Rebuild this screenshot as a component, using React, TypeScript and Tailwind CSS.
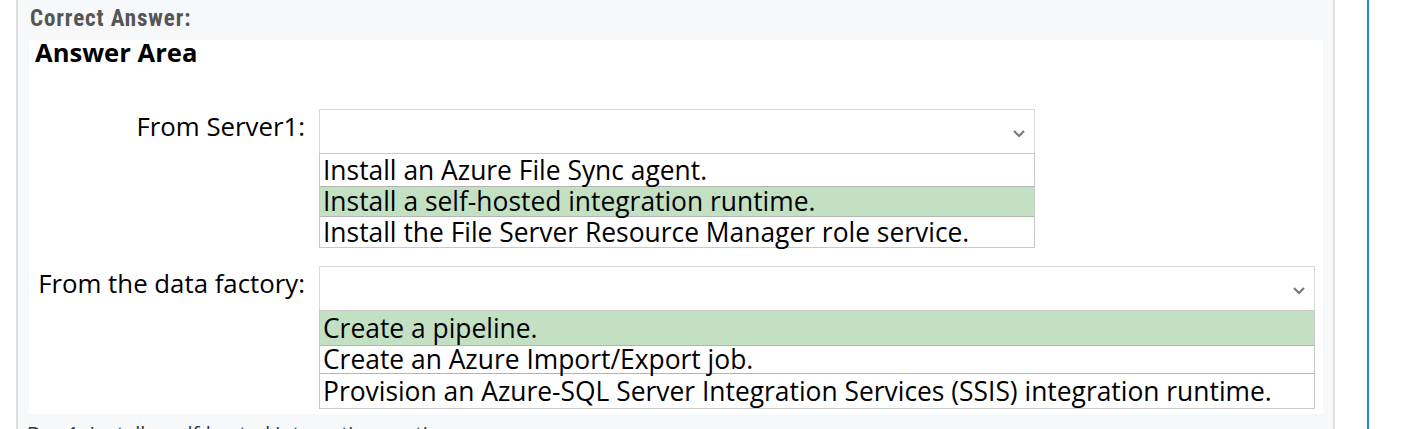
import { ReactNode } from "react";

type Opt = { text: string; correct?: boolean; h: string };

const server1: Opt[] = [
    { text: "Install an Azure File Sync agent.", h: "h-[32px]" },
    { text: "Install a self-hosted integration runtime.", correct: true, h: "h-[30px]" },
    { text: "Install the File Server Resource Manager role service.", h: "h-[31px]" },
];

const factory: Opt[] = [
    { text: "Create a pipeline.", correct: true, h: "h-[34px]" },
    { text: "Create an Azure Import/Export job.", h: "h-[28px]" },
    { text: "Provision an Azure-SQL Server Integration Services (SSIS) integration runtime.", h: "h-[35px]" },
];

function Chevron() {
    return (
        <svg width="14" height="9" viewBox="0 0 14 9" className="mr-[8px] mt-[4px]">
            <polyline points="2,2 7,7 12,2" fill="none" stroke="#7a7a7a" strokeWidth="2.2" />
        </svg>
    );
}

function Dropdown({ width, options }: { width: string; options: Opt[] }) {
    return (
        <div className={width}>
            <div className="h-[44px] border border-[#d9d9d9] border-b-0 bg-white flex items-center justify-end">
                <Chevron />
            </div>
            <div className="border border-[#c9c9c9] bg-white">
                {options.map((o, i) => (
                    <div
                        key={i}
                        className={`${o.h} flex items-center pl-[3px] whitespace-nowrap ${
                            i > 0 ? "border-t border-[#b4b4b4]" : ""
                        } ${o.correct ? "bg-[#c3e0c3]" : "bg-white"}`}
                    >
                        {o.text}
                    </div>
                ))}
            </div>
        </div>
    );
}

function Row({ label, children, top }: { label: string; children: ReactNode; top: string }) {
    return (
        <div className={`flex ${top}`}>
            <div className="w-[276px] shrink-0 h-[45px] pb-[10px] flex items-center justify-end text-[25.8px] whitespace-nowrap">
                {label}
            </div>
            <div className="ml-[14px]">{children}</div>
        </div>
    );
}

export default function App() {
    return (
        <div className="w-[1427px] h-[429px] bg-white overflow-hidden flex">
            <div className="w-[16px] shrink-0" />
            <div className="w-[1319px] shrink-0 bg-[#f7f8fa] border-l-2 border-r-2 border-[#dedede] pl-[11px] pr-[10px]">
                <div className="h-[40px] pt-[5px] pl-[1px] text-[23px] leading-[28px] tracking-[0.9px] font-bold text-[#555] font-['Liberation_Sans_Narrow','Roboto_Condensed',Roboto,sans-serif]">
                    Correct Answer:
                </div>
                <div className="h-[374px] bg-white text-black font-['Open_Sans','Noto_Sans',sans-serif] text-[26.4px] leading-none">
                    <div className="pl-[6px] h-[69px] text-[25.6px] font-bold leading-[26px]">Answer Area</div>
                    <Row label="From Server1:" top="">
                        <Dropdown width="w-[716px]" options={server1} />
                    </Row>
                    <Row label="From the data factory:" top="mt-[18px]">
                        <Dropdown width="w-[996px]" options={factory} />
                    </Row>
                </div>
                <div className="pt-[8px] -ml-[2px] text-[20px] leading-[24px] text-[#333] font-['Open_Sans',sans-serif] whitespace-nowrap">
                    Box 1: Install a self-hosted integration runtime.
                </div>
            </div>
            <div className="w-[32px] shrink-0" />
            <div className="w-[2px] shrink-0 bg-[#1a8ce3]" />
        </div>
    );
}
